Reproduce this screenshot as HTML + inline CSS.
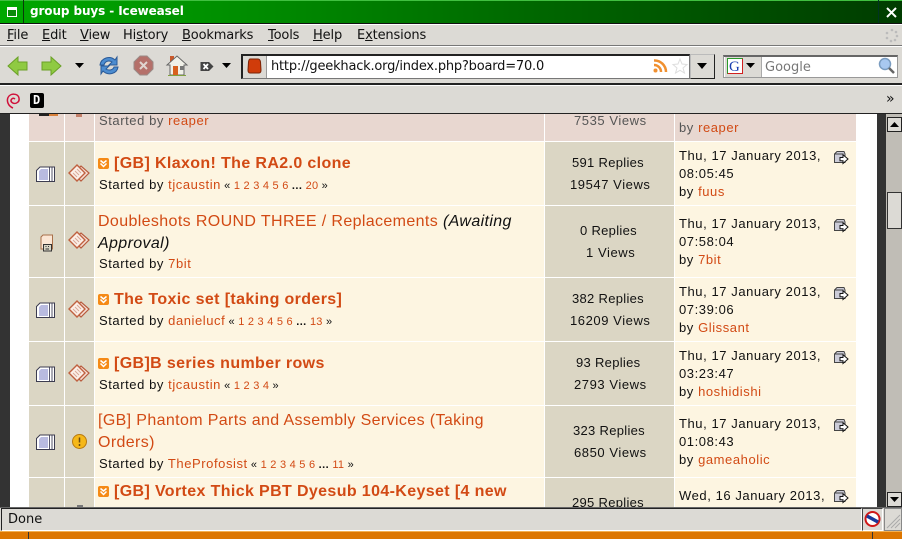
<!DOCTYPE html>
<html><head><meta charset="utf-8"><style>
html,body{margin:0;padding:0;width:902px;height:539px;overflow:hidden;background:#dcdad5}
*{box-sizing:border-box}
.a{position:absolute;white-space:nowrap}
.u{font-family:"DejaVu Sans",sans-serif;font-size:13px;color:#111;letter-spacing:-.15px}
.u u{text-decoration:underline}
.p{font-family:"Liberation Sans",sans-serif;font-size:13px;letter-spacing:.57px;color:#111;line-height:16px}
.r{letter-spacing:.3px}
.l{color:#d24a14}
.t{font-family:"Liberation Sans",sans-serif;font-size:16px;letter-spacing:.37px;color:#d24a14;line-height:20px}
.b{font-weight:bold;letter-spacing:.37px}
.s{font-size:11px;letter-spacing:.25px;margin-left:-1px}
.s b{letter-spacing:.4px}
.c{position:absolute}
svg{position:absolute;overflow:visible}
</style></head><body>
<svg width="0" height="0" style="position:absolute"><defs>
<g id="doc"><path d="M.5 4.500L4 1H18.500V15.500H.5Z" fill="#fff" stroke="#3c3c50"/><path d="M3 5L5 3H12V14H3Z" fill="#b9bbe0"/><path d="M13.500 1.500V15M16 1.500V15" stroke="#55556a"/></g>
<g id="env"><path d="M5 9L13 2L21 9L13 17Z" fill="#f4ded4" stroke="#b85a3c" stroke-width="1.200"/><path d="M1 9L9 1L17 9L9 17Z" fill="#fbeee6" stroke="#c0603f" stroke-width="1.400"/><path d="M5 9L9 13M7 7L11 11M9 5L13 9" stroke="#d8a898"/></g>
<g id="go"><rect x="0" y="0" width="11" height="11" rx="2" fill="#f58a16"/><path d="M2.500 2.500L5.500 5L8.500 2.500M2.500 5.500L5.500 8.500L8.500 5.500" fill="none" stroke="#fff" stroke-width="1.500"/></g>
<g id="last"><path d="M.5 3L3 .5H10L11 3V11.500H.5Z" fill="#ccccd8" stroke="#444"/><path d="M.5 3H9V6" fill="none" stroke="#444"/><path d="M6 6.500H9V3.800L14 8L9 12.500V9.800H6Z" fill="#fff" stroke="#111"/></g>
</defs></svg>

<!-- page content -->
<div class="c" style="left:0;top:114px;width:902px;height:394px;background:#fff"></div>
<div class="c" style="left:0;top:114px;width:10px;height:394px;background:#333"></div>
<div class="c" style="left:877px;top:114px;width:9px;height:394px;background:#333"></div>

<!-- row backgrounds -->
<div class="c" style="left:29px;top:114px;width:35px;height:27px;background:#e8d7d0"></div>
<div class="c" style="left:65px;top:114px;width:29px;height:27px;background:#e8d7d0"></div>
<div class="c" style="left:95px;top:114px;width:449px;height:27px;background:#e8d7d0"></div>
<div class="c" style="left:545px;top:114px;width:129px;height:27px;background:#e8d7d0"></div>
<div class="c" style="left:675px;top:114px;width:181px;height:27px;background:#e8d7d0"></div>
<div class="c" style="left:39px;top:114px;width:11px;height:2px;background:#222"></div>
<div class="c" style="left:49px;top:114px;width:9px;height:2px;background:#d8803a"></div>
<div class="c" style="left:76px;top:114px;width:6px;height:3px;background:#c4806a"></div>

<div class="c" style="left:29px;top:142px;width:35px;height:63px;background:#dbd6c4"></div><div class="c" style="left:65px;top:142px;width:29px;height:63px;background:#dbd6c4"></div><div class="c" style="left:95px;top:142px;width:449px;height:63px;background:#fdf5e1"></div><div class="c" style="left:545px;top:142px;width:129px;height:63px;background:#dbd6c4"></div><div class="c" style="left:675px;top:142px;width:181px;height:63px;background:#fdf5e1"></div>
<div class="c" style="left:29px;top:206px;width:35px;height:71px;background:#dbd6c4"></div><div class="c" style="left:65px;top:206px;width:29px;height:71px;background:#dbd6c4"></div><div class="c" style="left:95px;top:206px;width:449px;height:71px;background:#fdf5e1"></div><div class="c" style="left:545px;top:206px;width:129px;height:71px;background:#dbd6c4"></div><div class="c" style="left:675px;top:206px;width:181px;height:71px;background:#fdf5e1"></div>
<div class="c" style="left:29px;top:278px;width:35px;height:63px;background:#dbd6c4"></div><div class="c" style="left:65px;top:278px;width:29px;height:63px;background:#dbd6c4"></div><div class="c" style="left:95px;top:278px;width:449px;height:63px;background:#fdf5e1"></div><div class="c" style="left:545px;top:278px;width:129px;height:63px;background:#dbd6c4"></div><div class="c" style="left:675px;top:278px;width:181px;height:63px;background:#fdf5e1"></div>
<div class="c" style="left:29px;top:342px;width:35px;height:63px;background:#dbd6c4"></div><div class="c" style="left:65px;top:342px;width:29px;height:63px;background:#dbd6c4"></div><div class="c" style="left:95px;top:342px;width:449px;height:63px;background:#fdf5e1"></div><div class="c" style="left:545px;top:342px;width:129px;height:63px;background:#dbd6c4"></div><div class="c" style="left:675px;top:342px;width:181px;height:63px;background:#fdf5e1"></div>
<div class="c" style="left:29px;top:406px;width:35px;height:71px;background:#dbd6c4"></div><div class="c" style="left:65px;top:406px;width:29px;height:71px;background:#dbd6c4"></div><div class="c" style="left:95px;top:406px;width:449px;height:71px;background:#fdf5e1"></div><div class="c" style="left:545px;top:406px;width:129px;height:71px;background:#dbd6c4"></div><div class="c" style="left:675px;top:406px;width:181px;height:71px;background:#fdf5e1"></div>
<div class="c" style="left:29px;top:478px;width:35px;height:30px;background:#dbd6c4"></div><div class="c" style="left:65px;top:478px;width:29px;height:30px;background:#dbd6c4"></div><div class="c" style="left:95px;top:478px;width:449px;height:30px;background:#fdf5e1"></div><div class="c" style="left:545px;top:478px;width:129px;height:30px;background:#dbd6c4"></div><div class="c" style="left:675px;top:478px;width:181px;height:30px;background:#fdf5e1"></div>
<div class="c" style="left:77px;top:505px;width:6px;height:2px;background:#777"></div>

<!-- row 1 partial -->
<div class="a p" style="left:99px;top:113px;color:#555">Started by <span class="l">reaper</span></div>
<div class="a p" style="left:574px;top:113px;color:#555">7535 Views</div>
<div class="a p" style="left:679px;top:120px;color:#555">by <span class="l">reaper</span></div>

<!-- icons -->
<svg style="left:36px;top:166px" width="20" height="16"><use href="#doc"/></svg>
<svg style="left:68px;top:164px" width="22" height="20"><use href="#env"/></svg>
<svg style="left:40px;top:234px" width="14" height="18"><path d="M1 3L3 1H12.500V15H1Z" fill="#fbe6d4" stroke="#a8704a"/><rect x="3.500" y="10.500" width="8" height="6.500" fill="#d8d4c4" stroke="#333"/><path d="M5.500 12.500h1M8 12.500h1M5.500 15h3.500" stroke="#333"/></svg>
<svg style="left:68px;top:231px" width="22" height="20"><use href="#env"/></svg>
<svg style="left:36px;top:302px" width="20" height="16"><use href="#doc"/></svg>
<svg style="left:68px;top:300px" width="22" height="20"><use href="#env"/></svg>
<svg style="left:36px;top:366px" width="20" height="16"><use href="#doc"/></svg>
<svg style="left:68px;top:364px" width="22" height="20"><use href="#env"/></svg>
<svg style="left:36px;top:434px" width="20" height="16"><use href="#doc"/></svg>
<svg style="left:72px;top:434px" width="15" height="15"><circle cx="7.500" cy="7.500" r="7" fill="#f5b81a" stroke="#b87a10"/><path d="M7.500 3.500V8.500M7.500 10V12" stroke="#6a4a10" stroke-width="1.500"/></svg>

<!-- row 2 -->
<svg style="left:98px;top:158px" width="11" height="11"><use href="#go"/></svg>
<div class="a t b" style="left:114px;top:154px">[GB] Klaxon! The RA2.0 clone</div>
<div class="a p" style="left:99px;top:177px">Started by <span class="l">tjcaustin</span> <span class="s">« <span class="l">1 2 3 4 5 6</span> <b>...</b> <span class="l">20</span> »</span></div>
<div class="a p r" style="left:572px;top:155px">591 Replies</div>
<div class="a p" style="left:570px;top:177px">19547 Views</div>
<div class="a p" style="left:679px;top:148px">Thu, 17 January 2013,</div>
<div class="a p" style="left:679px;top:166px">08:05:45</div>
<div class="a p" style="left:679px;top:184px">by <span class="l">fuus</span></div>
<svg style="left:834px;top:151px" width="16" height="14"><use href="#last"/></svg>

<!-- row 3 -->
<div class="a t" style="left:98px;top:212px">Doubleshots ROUND THREE / Replacements <i style="color:#111">(Awaiting</i></div>
<div class="a t" style="left:98px;top:234px;color:#111"><i>Approval)</i></div>
<div class="a p" style="left:99px;top:256px">Started by <span class="l">7bit</span></div>
<div class="a p r" style="left:580px;top:223px">0 Replies</div>
<div class="a p" style="left:586px;top:245px">1 Views</div>
<div class="a p" style="left:679px;top:216px">Thu, 17 January 2013,</div>
<div class="a p" style="left:679px;top:234px">07:58:04</div>
<div class="a p" style="left:679px;top:252px">by <span class="l">7bit</span></div>
<svg style="left:834px;top:219px" width="16" height="14"><use href="#last"/></svg>

<!-- row 4 -->
<svg style="left:98px;top:294px" width="11" height="11"><use href="#go"/></svg>
<div class="a t b" style="left:114px;top:290px">The Toxic set [taking orders]</div>
<div class="a p" style="left:99px;top:313px">Started by <span class="l">danielucf</span> <span class="s">« <span class="l">1 2 3 4 5 6</span> <b>...</b> <span class="l">13</span> »</span></div>
<div class="a p r" style="left:572px;top:291px">382 Replies</div>
<div class="a p" style="left:570px;top:313px">16209 Views</div>
<div class="a p" style="left:679px;top:284px">Thu, 17 January 2013,</div>
<div class="a p" style="left:679px;top:302px">07:39:06</div>
<div class="a p" style="left:679px;top:320px">by <span class="l">Glissant</span></div>
<svg style="left:834px;top:287px" width="16" height="14"><use href="#last"/></svg>

<!-- row 5 -->
<svg style="left:98px;top:358px" width="11" height="11"><use href="#go"/></svg>
<div class="a t b" style="left:114px;top:354px">[GB]B series number rows</div>
<div class="a p" style="left:99px;top:377px">Started by <span class="l">tjcaustin</span> <span class="s">« <span class="l">1 2 3 4</span> »</span></div>
<div class="a p r" style="left:576px;top:355px">93 Replies</div>
<div class="a p" style="left:574px;top:377px">2793 Views</div>
<div class="a p" style="left:679px;top:348px">Thu, 17 January 2013,</div>
<div class="a p" style="left:679px;top:366px">03:23:47</div>
<div class="a p" style="left:679px;top:384px">by <span class="l">hoshidishi</span></div>
<svg style="left:834px;top:351px" width="16" height="14"><use href="#last"/></svg>

<!-- row 6 -->
<div class="a t" style="left:98px;top:411px">[GB] Phantom Parts and Assembly Services (Taking</div>
<div class="a t" style="left:98px;top:433px">Orders)</div>
<div class="a p" style="left:99px;top:456px">Started by <span class="l">TheProfosist</span> <span class="s">« <span class="l">1 2 3 4 5 6</span> <b>...</b> <span class="l">11</span> »</span></div>
<div class="a p r" style="left:573px;top:423px">323 Replies</div>
<div class="a p" style="left:574px;top:445px">6850 Views</div>
<div class="a p" style="left:679px;top:416px">Thu, 17 January 2013,</div>
<div class="a p" style="left:679px;top:434px">01:08:43</div>
<div class="a p" style="left:679px;top:452px">by <span class="l">gameaholic</span></div>
<svg style="left:834px;top:419px" width="16" height="14"><use href="#last"/></svg>

<!-- row 7 -->
<svg style="left:98px;top:486px" width="11" height="11"><use href="#go"/></svg>
<div class="a t b" style="left:114px;top:482px">[GB] Vortex Thick PBT Dyesub 104-Keyset [4 new</div>
<div class="a p r" style="left:572px;top:495px">295 Replies</div>
<div class="a p" style="left:679px;top:488px">Wed, 16 January 2013,</div>
<svg style="left:834px;top:490px" width="16" height="14"><use href="#last"/></svg>

<!-- scrollbar -->
<div class="c" style="left:886px;top:114px;width:16px;height:394px;background:#c0bdb6"></div>
<div class="c" style="left:887px;top:117px;width:15px;height:15px;background:#dcdad5;border:1px solid #222;border-width:1px 1px 1px 1px"></div>
<svg style="left:890px;top:122px" width="9" height="5"><path d="M0 5L4.500 0L9 5Z" fill="#000"/></svg>
<div class="c" style="left:887px;top:192px;width:15px;height:37px;background:#dcdad5;border:1px solid #333"></div>
<div class="c" style="left:887px;top:492px;width:15px;height:15px;background:#dcdad5;border:1px solid #222"></div>
<svg style="left:890px;top:497px" width="9" height="5"><path d="M0 0L4.500 5L9 0Z" fill="#000"/></svg>

<!-- title bar -->
<div class="c" style="left:0;top:0;width:902px;height:24px;background:linear-gradient(90deg,#00a800 0,#008a00 30%,#006400 62%,#003c00 100%);border-top:1px solid #40c040;border-bottom:1px solid #111"></div>
<div class="c" style="left:23px;top:0;width:1px;height:23px;background:#0a3a0a"></div>
<div class="c" style="left:7px;top:7px;width:10px;height:10px;border:1px solid #fff;border-top-width:3px;background:#0a8a0a"></div>
<div class="a" style="left:30px;top:4px;font:bold 12px 'DejaVu Sans',sans-serif;color:#fff;letter-spacing:-.1px">group buys - Iceweasel</div>
<div class="c" style="left:878px;top:0;width:1px;height:23px;background:#032;"></div>
<svg style="left:886px;top:7px" width="11" height="11"><path d="M1 1L10 10M10 1L1 10" stroke="#fff" stroke-width="2"/></svg>

<!-- menu bar -->
<div class="c" style="left:0;top:24px;width:902px;height:22px;background:#dcdad5;border-bottom:1px solid #777;border-top:1px solid #fff"></div>
<div class="a u" style="left:7px;top:28px"><u>F</u>ile</div>
<div class="a u" style="left:42px;top:28px"><u>E</u>dit</div>
<div class="a u" style="left:80px;top:28px"><u>V</u>iew</div>
<div class="a u" style="left:123px;top:28px">Hi<u>s</u>tory</div>
<div class="a u" style="left:182px;top:28px"><u>B</u>ookmarks</div>
<div class="a u" style="left:268px;top:28px"><u>T</u>ools</div>
<div class="a u" style="left:313px;top:28px"><u>H</u>elp</div>
<div class="a u" style="left:357px;top:28px">E<u>x</u>tensions</div>
<svg style="left:885px;top:28px" width="14" height="14"><g fill="#bbb"><circle cx="7" cy="2" r="1.300"/><circle cx="11" cy="4" r="1.300"/><circle cx="12" cy="8" r="1.300"/><circle cx="10" cy="12" r="1.300"/><circle cx="6" cy="13" r="1.300"/><circle cx="2" cy="10" r="1.300"/><circle cx="2" cy="5" r="1.300"/></g></svg>

<!-- nav bar -->
<div class="c" style="left:0;top:46px;width:902px;height:39px;background:#dcdad5;border-top:1px solid #fff;border-bottom:2px solid #222"></div>
<svg style="left:7px;top:55px" width="21" height="21"><path d="M1 11L11 2V7H20V15H11V20Z" fill="#8fca42" stroke="#6ba028"/></svg>
<svg style="left:41px;top:55px" width="21" height="21"><path d="M20 11L10 2V7H1V15H10V20Z" fill="#8fca42" stroke="#6ba028"/></svg>
<svg style="left:75px;top:63px" width="10" height="6"><path d="M0 0H9L4.500 5Z" fill="#000"/></svg>
<svg style="left:99px;top:55px" width="20" height="21"><path d="M1 10C2 3 11 0 16 5L18 2V10H10L13 7C10 5 6 6 5 10Z" fill="#4c8cd0" stroke="#2a5a98"/><path d="M19 12C18 19 9 21 4 16L2 19V11H10L7 14C10 16 14 15 15 12Z" fill="#4c8cd0" stroke="#2a5a98"/></svg>
<svg style="left:133px;top:55px" width="21" height="21"><path d="M7 1H14L20 7V14L14 20H7L1 14V7Z" fill="#b5706a" stroke="#9a8a86"/><path d="M7 7L14 14M14 7L7 14" stroke="#e0d4d0" stroke-width="2"/></svg>
<svg style="left:166px;top:54px" width="23" height="23"><rect x="4" y="2" width="4" height="6" fill="#c8582a"/><path d="M1 11L11 2L21 11L18 11V21H4V11Z" fill="#f0f0e8" stroke="#666"/><rect x="7" y="12" width="5" height="9" fill="#d8601e"/><rect x="14" y="12" width="4" height="4" fill="#777"/><path d="M2 21.500H20" stroke="#80a040"/></svg>
<svg style="left:200px;top:61px" width="14" height="11"><path d="M0.500 1H9L13.500 5.500L9 10H0.500Z" fill="#444"/><path d="M3.500 3L8 8M8 3L3.500 8" stroke="#fff" stroke-width="1.800"/></svg>
<svg style="left:222px;top:63px" width="10" height="6"><path d="M0 0H9L4.500 5Z" fill="#000"/></svg>

<!-- url bar -->
<div class="c" style="left:241px;top:54px;width:449px;height:25px;background:#fff;border:1px solid #777;border-top:2px solid #222;border-left:2px solid #222"></div>
<div class="c" style="left:243px;top:56px;width:24px;height:22px;background:#dcdad5;border-right:1px solid #999"></div>
<svg style="left:247px;top:58px" width="15" height="16"><path d="M3 1H11Q13 1 13.500 4L14 12Q14 15 12 15H3Q1 15 1 12L1.500 4Q2 1 3 1Z" fill="#d03c0a" stroke="#7a2408"/></svg>
<div class="a u" style="left:271px;top:59px;letter-spacing:-.2px">http://geekhack.org/index.php?board=70.0</div>
<svg style="left:653px;top:58px" width="15" height="15"><circle cx="2.500" cy="12.500" r="2" fill="#f09030"/><path d="M1 7A7 7 0 0 1 8 14M1 2.500A11.500 11.500 0 0 1 13 14" fill="none" stroke="#f09030" stroke-width="2.500"/></svg>
<svg style="left:672px;top:58px" width="16" height="16"><path d="M8 1L10 6L15 6.500L11 10L12.500 15L8 12.300L3.500 15L5 10L1 6.500L6 6Z" fill="#fff" stroke="#ddd"/></svg>
<div class="c" style="left:690px;top:54px;width:25px;height:25px;background:#dcdad5;border:1px solid #bbb;border-right:1px solid #222;border-bottom:1px solid #222"></div>
<svg style="left:697px;top:63px" width="11" height="6"><path d="M0 0H10L5 6Z" fill="#000"/></svg>

<!-- search -->
<div class="c" style="left:723px;top:55px;width:175px;height:23px;background:#fff;border:1px solid #999;border-top:2px solid #666"></div>
<div class="c" style="left:725px;top:57px;width:37px;height:20px;background:#dcdad5;border-right:1px solid #aaa"></div>
<svg style="left:727px;top:58px" width="17" height="16"><rect x=".5" y=".5" width="15" height="15" fill="#fff" stroke="#2a9a2a"/><path d="M15.500 .5V15.500H.5" fill="none" stroke="#d02020"/><path d="M.5 15.500V.5H15.500" fill="none" stroke="#2a9a2a"/><text x="2" y="13" font-family="Liberation Serif,serif" font-size="15" fill="#1a3fb0">G</text></svg>
<svg style="left:746px;top:63px" width="10" height="6"><path d="M0 0H9L4.500 5Z" fill="#000"/></svg>
<div class="a u" style="left:765px;top:60px;color:#777;letter-spacing:0">Google</div>
<svg style="left:878px;top:57px" width="18" height="18"><circle cx="7" cy="7" r="5.500" fill="#a8c8f0" stroke="#7a9cc0" stroke-width="1.500"/><path d="M11 11L16 16" stroke="#666" stroke-width="2.500"/></svg>

<!-- bookmarks toolbar -->
<div class="c" style="left:0;top:85px;width:902px;height:29px;background:#dcdad5;border-top:1px solid #fff;border-bottom:1px solid #222"></div>
<svg style="left:6px;top:93px" width="14" height="16"><path d="M7 15C2 13 .5 8 2 4.500C4 0 12 0 13 5C14 10 8 12 5.500 9C4 7 6.500 4 9 6" fill="none" stroke="#d0103a" stroke-width="1.500"/></svg>
<div class="c" style="left:30px;top:93px;width:14px;height:15px;background:#000;border-radius:2px"></div>
<div class="a" style="left:33px;top:93px;font:bold 12px 'DejaVu Sans Mono','Liberation Mono',monospace;color:#fff">D</div>
<div class="a u" style="left:886px;top:91px;font-size:14px;letter-spacing:0">»</div>

<!-- status bar -->
<div class="c" style="left:0;top:507px;width:902px;height:25px;background:#dcdad5;border-top:1px solid #666"></div>
<div class="c" style="left:1px;top:508px;width:861px;height:23px;border:1px solid #222;border-right-color:#fff;border-bottom-color:#fff"></div>
<div class="a u" style="left:8px;top:512px;letter-spacing:0">Done</div>
<div class="c" style="left:862px;top:508px;width:21px;height:23px;border:1px solid #444;border-right-color:#fff;border-bottom-color:#fff"></div>
<svg style="left:864px;top:511px" width="17" height="17"><circle cx="8.500" cy="8" r="7" fill="#fff" stroke="#d01818" stroke-width="2"/><path d="M3 5L14 11" stroke="#1a3a9a" stroke-width="3.500"/></svg>
<div class="c" style="left:884px;top:508px;width:18px;height:23px;border:1px solid #888"></div>
<svg style="left:886px;top:514px" width="15" height="15"><path d="M14 1L1 14M14 5L5 14M14 9L9 14" stroke="#aaa"/></svg>

<!-- orange panel -->
<div class="c" style="left:0;top:531px;width:902px;height:8px;background:#dd7600;border-top:1px solid #f4b050"></div>
<div class="c" style="left:28px;top:532px;width:1px;height:7px;background:#333"></div>
<div class="c" style="left:872px;top:532px;width:1px;height:7px;background:#333"></div>
</body></html>
